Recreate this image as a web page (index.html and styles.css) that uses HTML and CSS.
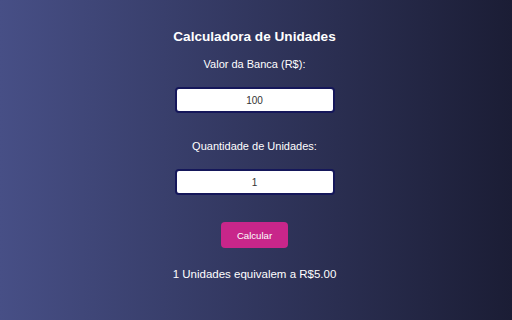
FILE: index.html
```html
<!DOCTYPE html>
<html>
<head>
  <title>Calculadora de Unidades</title>
  <link rel="stylesheet" href="styles.css">
</head>
<body>
  <div class="container">
    <h2 class="title">Calculadora de Unidades</h2>
    <label class="label" for="banca">Valor da Banca (R$):</label>
    <input class="field" type="number" id="banca" value="100">
    <label class="label" for="unidades">Quantidade de Unidades:</label>
    <input class="field" type="number" id="unidades" value="1">
    <button class="button" onclick="calcular()">Calcular</button>
    <p class="result" id="result">1 Unidades equivalem a R$5.00</p>
  </div>

  <script>
    function calcular() {
      const banca = parseFloat(document.getElementById('banca').value) || 0;
      const unidades = parseFloat(document.getElementById('unidades').value) || 0;
      const valor = banca * 0.05 * unidades;
      document.getElementById('result').innerHTML =
        unidades + ' Unidades equivalem a R$' + valor.toFixed(2);
    }
  </script>
</body>
</html>
```

FILE: styles.css
```css
/* Estilos da calculadora */
html, body {
  height: 100%;
}
body {
  margin: 0;
  font-family: "Liberation Sans", Arial, sans-serif;
  color: #fff;
  background: linear-gradient(to right, #474f86, #1b1d35);
}
.container {
  display: flex;
  flex-direction: column;
  align-items: center;
  padding: 29px 3px 0 0;
}
.title {
  margin: 0;
  font-size: 13.6px;
  line-height: 16px;
}
.label {
  margin-top: 13px;
  font-size: 11px;
  line-height: 13px;
}
.field {
  box-sizing: border-box;
  width: 160px;
  height: 26px;
  margin-top: 16px;
  margin-bottom: 27px;
  border: 2px solid #15175a;
  border-radius: 4px;
  background: #fff;
  text-align: center;
  font-family: "Liberation Sans", Arial, sans-serif;
  font-size: 10px;
  color: #333;
  -moz-appearance: textfield;
}
.field::-webkit-inner-spin-button,
.field::-webkit-outer-spin-button {
  -webkit-appearance: none;
  margin: 0;
}
.field + .label {
  margin-top: 0;
}
.button {
  box-sizing: border-box;
  width: 67px;
  height: 26px;
  margin-top: 0;
  padding: 0;
  border: none;
  border-radius: 4px;
  background-color: #c8268a;
  color: #fff;
  font-family: "Liberation Sans", Arial, sans-serif;
  font-size: 9.6px;
  cursor: pointer;
}
.result {
  margin: 19px 0 0;
  font-size: 11.5px;
  line-height: 14px;
}
```
